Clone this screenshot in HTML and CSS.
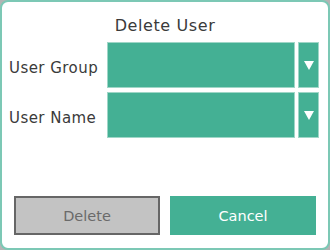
FILE: index.html
```html
<!DOCTYPE html>
<html lang="en">
<head>
  <meta charset="UTF-8" />
  <title>Delete User</title>
  <link rel="stylesheet" href="styles.css">
</head>
<body>
  <div class="dialog">
    <div class="title">Delete User</div>

    <div class="field">
      <div class="label">User Group</div>
      <div class="combo">
        <div class="combo-value"></div>
        <div class="combo-arrow">
          <svg width="10" height="10" viewBox="0 0 10 10"><polygon points="0,1 10,1 5,10" fill="#fff"/></svg>
        </div>
      </div>
    </div>

    <div class="field">
      <div class="label">User Name</div>
      <div class="combo">
        <div class="combo-value"></div>
        <div class="combo-arrow">
          <svg width="10" height="10" viewBox="0 0 10 10"><polygon points="0,1 10,1 5,10" fill="#fff"/></svg>
        </div>
      </div>
    </div>

    <div class="actions">
      <button class="btn btn-disabled">Delete</button>
      <button class="btn btn-primary">Cancel</button>
    </div>
  </div>
</body>
</html>
```

FILE: styles.css
```css
body {
  margin: 0;
  background: #b4b4b4;
  font-family: "DejaVu Sans", sans-serif;
  color: #3a3a3a;
}
.dialog {
  box-sizing: border-box;
  width: 330px;
  height: 250px;
  background: #fff;
  border: 2px solid #7cc8b5;
  border-radius: 8px;
  display: flex;
  flex-direction: column;
  gap: 4px;
}
.title {
  box-sizing: border-box;
  height: 36px;
  padding-top: 11px;
  display: flex;
  align-items: center;
  justify-content: center;
  font-size: 16px;
  letter-spacing: 0.6px;
}
.field {
  display: flex;
  align-items: center;
  height: 46px;
  padding-left: 7px;
}
.label {
  width: 98px;
  padding-top: 5px;
  font-size: 15px;
  letter-spacing: 0.45px;
}
.combo {
  display: flex;
  gap: 3px;
  height: 100%;
}
.combo-value,
.combo-arrow {
  box-sizing: border-box;
  background: #44b094;
  border: 1px solid #9fd6c7;
}
.combo-value {
  width: 188px;
}
.combo-arrow {
  width: 21px;
  display: flex;
  align-items: center;
  justify-content: center;
}
.actions {
  margin-top: auto;
  padding: 0 12px 13px;
  display: flex;
  gap: 10px;
}
.btn {
  flex: 1;
  height: 39px;
  font-family: "DejaVu Sans", sans-serif;
  font-size: 14.5px;
  border: 2px solid;
}
.btn-disabled {
  background: #c3c3c3;
  border-color: #666;
  color: #6a6a6a;
}
.btn-primary {
  background: #44b094;
  border-color: #44b094;
  color: #fff;
}
```
